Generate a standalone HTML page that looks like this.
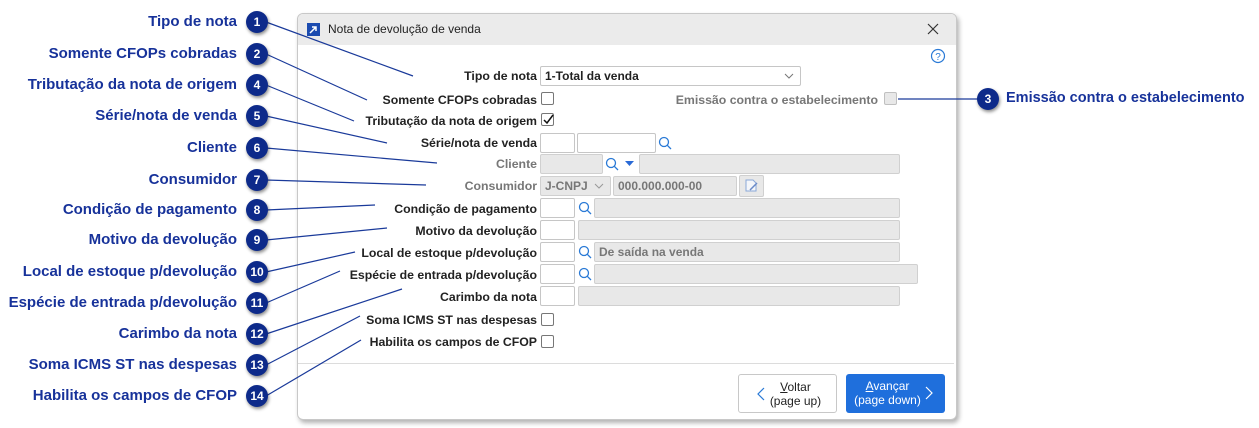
<!DOCTYPE html>
<html><head><meta charset="utf-8"><style>
body{margin:0;width:1259px;height:428px;background:#fff;font-family:"Liberation Sans",sans-serif;position:relative;overflow:hidden}
.a{position:absolute}
.cl{position:absolute;right:1022px;font-size:15px;font-weight:bold;color:#17329a;white-space:nowrap;line-height:18px}
.b{position:absolute;width:22px;height:22px;border-radius:50%;background:#0d2a8a;color:#fff;font-size:12px;font-weight:bold;text-align:center;line-height:22px;box-shadow:1px 2px 3px rgba(0,0,0,.45);z-index:3}
.dlg{position:absolute;left:297px;top:13px;width:658px;height:405px;border:1px solid #c8c8c8;border-radius:6px;background:#fff;box-shadow:2px 3px 5px rgba(0,0,0,.3);overflow:hidden}
.lb{position:absolute;right:722px;font-size:12.3px;font-weight:bold;color:#222;white-space:nowrap;line-height:14px}
.lb.g{color:#777}
.f{position:absolute;height:20px;box-sizing:border-box;border:1px solid #c6c6c6;border-radius:2px;background:#fff;font-size:12px;font-weight:bold;line-height:18px;padding-left:4px;color:#222}
.f.d{background:#e8e8e8;color:#777;border-color:#d0d0d0}
.cb{position:absolute;width:13px;height:13px;box-sizing:border-box;border:1px solid #777;border-radius:2px;background:#fff}
.s{position:absolute;width:14px;height:14px}
</style></head><body>
<div class="cl" style="top:13px">Tipo de nota</div><div class="b" style="left:246px;top:11px">1</div>
<div class="cl" style="top:45px">Somente CFOPs cobradas</div><div class="b" style="left:246px;top:43px">2</div>
<div class="cl" style="top:76px">Tributação da nota de origem</div><div class="b" style="left:246px;top:74px">4</div>
<div class="cl" style="top:107px">Série/nota de venda</div><div class="b" style="left:246px;top:105px">5</div>
<div class="cl" style="top:139px">Cliente</div><div class="b" style="left:246px;top:137px">6</div>
<div class="cl" style="top:171px">Consumidor</div><div class="b" style="left:246px;top:169px">7</div>
<div class="cl" style="top:201px">Condição de pagamento</div><div class="b" style="left:246px;top:199px">8</div>
<div class="cl" style="top:231px">Motivo da devolução</div><div class="b" style="left:246px;top:229px">9</div>
<div class="cl" style="top:263px">Local de estoque p/devolução</div><div class="b" style="left:246px;top:261px">10</div>
<div class="cl" style="top:294px">Espécie de entrada p/devolução</div><div class="b" style="left:246px;top:292px">11</div>
<div class="cl" style="top:325px">Carimbo da nota</div><div class="b" style="left:246px;top:323px">12</div>
<div class="cl" style="top:356px">Soma ICMS ST nas despesas</div><div class="b" style="left:246px;top:354px">13</div>
<div class="cl" style="top:387px">Habilita os campos de CFOP</div><div class="b" style="left:246px;top:385px">14</div>

<div class="dlg">
<div class="a" style="left:0;top:0;width:658px;height:31px;background:#ebebeb"></div>
<div class="a" style="left:9px;top:9px;width:13px;height:13px;background:#1b4bb0"><svg width="13" height="13"><path d="M3 10L9 4M5 4H9V8" stroke="#fff" stroke-width="1.5" fill="none"/></svg></div>
<div class="a" style="left:30px;top:8px;font-size:12px;color:#222">Nota de devolução de venda</div>
<svg class="a" style="left:629px;top:9px" width="12" height="12"><path d="M1 1L11 11M11 1L1 11" stroke="#333" stroke-width="1.2"/></svg>
<svg class="a" style="left:632px;top:34px" width="16" height="16"><circle cx="8" cy="8" r="6.5" stroke="#2a7ad6" stroke-width="1.2" fill="none"/><text x="8" y="12" font-size="10" text-anchor="middle" fill="#2a7ad6" font-family="Liberation Sans">?</text></svg>
</div>
<div class="lb" style="top:69px">Tipo de nota</div>
<div class="f" style="left:540px;top:66px;width:261px">1-Total da venda<svg class="a" style="left:243px;top:5px" width="10" height="8"><path d="M1 2L5 6L9 2" stroke="#777" fill="none"/></svg></div>
<div class="lb" style="top:93px">Somente CFOPs cobradas</div><div class="cb" style="left:541px;top:92px"></div>
<div class="a" style="right:381px;top:93px;font-size:12.3px;font-weight:bold;color:#777;white-space:nowrap">Emissão contra o estabelecimento</div>
<div class="cb" style="left:884px;top:92px;border-color:#c0c0c0;background:#e8e8e8"></div>
<div class="b" style="left:977px;top:88px">3</div>
<div class="a" style="left:1006px;top:90px;font-size:14.5px;font-weight:bold;color:#17329a;white-space:nowrap">Emissão contra o estabelecimento</div>
<div class="lb" style="top:114px">Tributação da nota de origem</div><div class="cb" style="left:541px;top:113px"><svg class="a" style="left:1px;top:0" width="11" height="11"><path d="M1 6L4 9L10 1" stroke="#111" stroke-width="1.5" fill="none"/></svg></div>
<div class="lb" style="top:136px">Série/nota de venda</div>
<div class="f" style="left:540px;top:133px;width:35px"></div><div class="f" style="left:577px;top:133px;width:79px"></div>
<svg class="s" style="left:658px;top:136px"><circle cx="6" cy="6" r="4.5" stroke="#2a7ad6" stroke-width="1.3" fill="none"/><path d="M9.3 9.3L13 13" stroke="#2a7ad6" stroke-width="1.3"/></svg>
<div class="lb g" style="top:157px">Cliente</div>
<div class="f d" style="left:540px;top:154px;width:63px"></div>
<svg class="s" style="left:605px;top:157px"><circle cx="6" cy="6" r="4.5" stroke="#2a7ad6" stroke-width="1.3" fill="none"/><path d="M9.3 9.3L13 13" stroke="#2a7ad6" stroke-width="1.3"/></svg>
<svg class="a" style="left:625px;top:160px" width="10" height="8"><path d="M0 1H9L4.5 6Z" fill="#2a6ad6"/></svg>
<div class="f d" style="left:639px;top:154px;width:261px"></div>
<div class="lb g" style="top:179px">Consumidor</div>
<div class="f d" style="left:540px;top:176px;width:71px">J-CNPJ<svg class="a" style="left:53px;top:5px" width="10" height="8"><path d="M1 2L5 6L9 2" stroke="#999" fill="none"/></svg></div>
<div class="f d" style="left:613px;top:176px;width:124px">000.000.000-00</div>
<div class="f d" style="left:739px;top:175px;width:25px;height:22px"><svg class="a" style="left:4px;top:3px" width="16" height="14"><path d="M2 1H9L12 4V12H2Z" stroke="#8aa8d8" fill="#f4f6fa"/><path d="M6 11L13 4" stroke="#6a8ac8" stroke-width="1.5"/></svg></div>
<div class="lb" style="top:202px">Condição de pagamento</div>
<div class="f" style="left:540px;top:198px;width:35px"></div>
<svg class="s" style="left:578px;top:201px"><circle cx="6" cy="6" r="4.5" stroke="#2a7ad6" stroke-width="1.3" fill="none"/><path d="M9.3 9.3L13 13" stroke="#2a7ad6" stroke-width="1.3"/></svg>
<div class="f d" style="left:594px;top:198px;width:306px"></div>
<div class="lb" style="top:224px">Motivo da devolução</div>
<div class="f" style="left:540px;top:220px;width:35px"></div>
<div class="f d" style="left:578px;top:220px;width:322px"></div>
<div class="lb" style="top:246px">Local de estoque p/devolução</div>
<div class="f" style="left:540px;top:242px;width:35px"></div>
<svg class="s" style="left:578px;top:245px"><circle cx="6" cy="6" r="4.5" stroke="#2a7ad6" stroke-width="1.3" fill="none"/><path d="M9.3 9.3L13 13" stroke="#2a7ad6" stroke-width="1.3"/></svg>
<div class="f d" style="left:594px;top:242px;width:306px">De saída na venda</div>
<div class="lb" style="top:268px">Espécie de entrada p/devolução</div>
<div class="f" style="left:540px;top:264px;width:35px"></div>
<svg class="s" style="left:578px;top:267px"><circle cx="6" cy="6" r="4.5" stroke="#2a7ad6" stroke-width="1.3" fill="none"/><path d="M9.3 9.3L13 13" stroke="#2a7ad6" stroke-width="1.3"/></svg>
<div class="f d" style="left:594px;top:264px;width:324px"></div>
<div class="lb" style="top:290px">Carimbo da nota</div>
<div class="f" style="left:540px;top:286px;width:35px"></div>
<div class="f d" style="left:578px;top:286px;width:322px"></div>
<div class="lb" style="top:313px">Soma ICMS ST nas despesas</div><div class="cb" style="left:541px;top:313px"></div>
<div class="lb" style="top:335px">Habilita os campos de CFOP</div><div class="cb" style="left:541px;top:335px"></div>
<div class="a" style="left:298px;top:363px;width:656px;height:1px;background:#dcdcdc"></div>
<div class="a" style="left:738px;top:374px;width:99px;height:39px;box-sizing:border-box;border:1px solid #c8c8c8;border-radius:3px;background:#fff;font-size:12px;color:#222;text-align:center;line-height:14px;padding-top:5px;padding-left:16px"><u>V</u>oltar<br>(page up)
<svg class="a" style="left:18px;top:12px" width="8" height="14"><path d="M7 1L1 7L7 13" stroke="#2a7ad6" fill="none" stroke-width="1.2"/></svg></div>
<div class="a" style="left:846px;top:374px;width:99px;height:39px;box-sizing:border-box;border-radius:3px;background:#1f6fdc;font-size:12px;color:#fff;text-align:center;line-height:14px;padding-top:5px;padding-right:16px"><u>A</u>vançar<br>(page down)
<svg class="a" style="left:79px;top:12px" width="8" height="14"><path d="M1 1L7 7L1 13" stroke="#fff" fill="none" stroke-width="1.2"/></svg></div>

<svg class="a" style="left:0;top:0;z-index:2" width="1259" height="428"><g stroke="#1a3a9a" stroke-width="1.2" fill="none">
<line x1="266" y1="22" x2="413" y2="76"/>
<line x1="266" y1="54" x2="367" y2="100"/>
<line x1="266" y1="85" x2="354" y2="121"/>
<line x1="266" y1="116" x2="387" y2="143"/>
<line x1="266" y1="148" x2="437" y2="163"/>
<line x1="266" y1="180" x2="426" y2="185"/>
<line x1="266" y1="210" x2="375" y2="205"/>
<line x1="266" y1="240" x2="387" y2="228"/>
<line x1="266" y1="272" x2="355" y2="252"/>
<line x1="266" y1="303" x2="340" y2="271"/>
<line x1="266" y1="334" x2="402" y2="289"/>
<line x1="266" y1="365" x2="360" y2="316"/>
<line x1="266" y1="396" x2="361" y2="340"/>
<line x1="898" y1="99" x2="980" y2="99"/>
</g></svg>
</body></html>
